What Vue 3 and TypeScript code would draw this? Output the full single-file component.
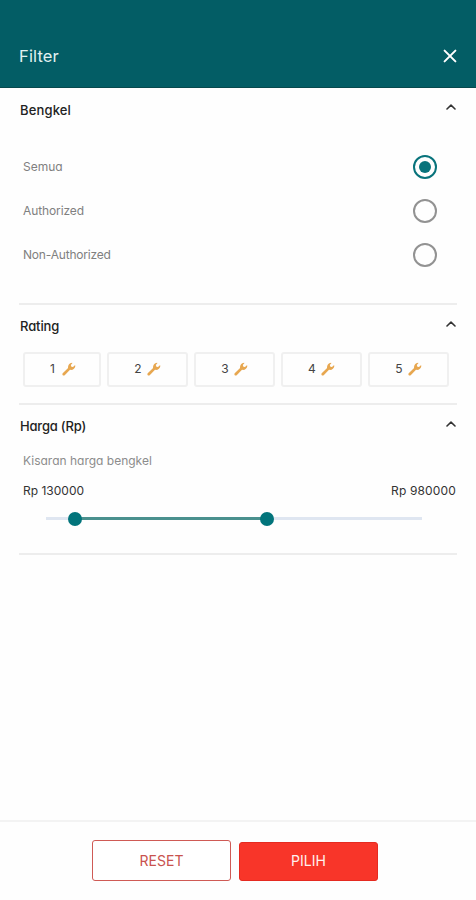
<script setup lang="ts">
import { computed, ref } from 'vue'

interface Workshop {
  id: string
  label: string
}

const workshops: Workshop[] = [
  { id: 'all', label: 'Semua' },
  { id: 'authorized', label: 'Authorized' },
  { id: 'non-authorized', label: 'Non-Authorized' },
]
const ratings: number[] = [1, 2, 3, 4, 5]

const workshop = ref<string>('all')
const selectedRating = ref<number | null>(null)
const low = ref<number>(7.8)
const high = ref<number>(58.9)

const rangeStyle = computed(() => ({ left: `${low.value}%`, width: `${high.value - low.value}%` }))

function reset(): void {
  workshop.value = 'all'
  selectedRating.value = null
}
</script>

<template>
  <div class="screen">
    <header class="header">
      <h1 class="title">Filter</h1>
      <svg class="close" viewBox="0 0 14 14"><path d="M1.6 1.6 12.4 12.4M12.4 1.6 1.6 12.4" /></svg>
    </header>

    <main class="content">
      <section class="section workshop">
        <div class="heading">
          <h2 class="name bengkel">Bengkel</h2>
          <svg class="chevron" viewBox="0 0 10 6"><path d="M1 5 5 1.2 9 5" /></svg>
        </div>
        <div class="options">
          <div v-for="w in workshops" :key="w.id" class="option" @click="workshop = w.id">
            <span class="label" :class="w.id">{{ w.label }}</span>
            <span class="radio" :class="{ on: workshop === w.id }"></span>
          </div>
        </div>
      </section>

      <section class="section rating">
        <div class="heading">
          <h2 class="name">Rating</h2>
          <svg class="chevron" viewBox="0 0 10 6"><path d="M1 5 5 1.2 9 5" /></svg>
        </div>
        <div class="ratings">
          <button v-for="r in ratings" :key="r" class="rate" @click="selectedRating = r">
            <span class="digit">{{ r }}</span>
            <svg class="wrench" viewBox="0 0 14 14">
              <path d="M.7 11.3 6.1 6.1C5.6 3.6 7.1 1.1 10 .7L10.5 1.1 8.8 3 9.4 4.7 11 5 12.9 3.2 13.4 3.7C13.1 6.5 10.7 8.4 8 7.8L2.7 13.2C1.2 14-.3 12.7 .7 11.3Z" />
            </svg>
          </button>
        </div>
      </section>

      <section class="section price">
        <div class="heading">
          <h2 class="name harga">Harga (Rp)</h2>
          <svg class="chevron" viewBox="0 0 10 6"><path d="M1 5 5 1.2 9 5" /></svg>
        </div>
        <p class="hint">Kisaran harga bengkel</p>
        <div class="values"><span>Rp 130000</span><span class="max">Rp 980000</span></div>
        <div class="slider">
          <div class="range" :style="rangeStyle"></div>
          <div class="thumb" :style="{ left: `${low}%` }"></div>
          <div class="thumb" :style="{ left: `${high}%` }"></div>
        </div>
      </section>
    </main>

    <footer class="footer">
      <button class="action reset" @click="reset">RESET</button>
      <button class="action apply">PILIH</button>
    </footer>
  </div>
</template>

<style>
body {
  margin: 0;
  background: #fefefe;
}
</style>

<style scoped>
.screen {
  display: flex;
  flex-direction: column;
  height: 900px;
  box-sizing: border-box;
  background: #fefefe;
  font-family: Inter, "Liberation Sans", sans-serif;
  font-feature-settings: "cv11", "ss03";
  color: #333;
}
h1, h2, p { margin: 0; }
button { font: inherit; font-feature-settings: inherit; color: inherit; padding: 0; box-sizing: border-box; }
.header {
  display: flex;
  align-items: center;
  justify-content: space-between;
  box-sizing: border-box;
  height: 88px;
  padding: 24px 19px 0;
  background: #035d65;
  border-bottom: 1px solid #07494d;
}
.title {
  color: #e2f1f1;
  font-size: 16.5px;
  font-weight: 400;
  letter-spacing: 0.15px;
  line-height: 24px;
}
.close { width: 14px; height: 14px; }
.close path { fill: none; stroke: #fff; stroke-width: 2; stroke-linecap: round; }
.content { flex: 1; padding: 0 19px; }
.section { box-sizing: border-box; border-bottom: 2px solid #ededed; }
.workshop { height: 217px; }
.rating { height: 100px; }
.price { height: 150px; }
.heading {
  display: flex;
  justify-content: space-between;
  padding: 11px 1px 0;
  height: 22px;
}
.name {
  font-size: 13px;
  font-weight: 500;
  line-height: 22px;
  color: #222;
}
.rating .name, .price .name { line-height: 20px; }
.rating .name { letter-spacing: -0.1px; }
.bengkel { letter-spacing: 0.15px; }
.harga { letter-spacing: -0.2px; }
.chevron { width: 10px; height: 6px; margin-top: 5px; }
.chevron path { fill: none; stroke: #333; stroke-width: 1.6; stroke-linecap: round; stroke-linejoin: round; }
.options { padding: 24px 20px 0 4px; }
.option {
  display: flex;
  align-items: center;
  justify-content: space-between;
  height: 44px;
}
.label { font-size: 12px; color: #808080; line-height: 20px; }
.authorized { letter-spacing: -0.1px; }
.non-authorized { letter-spacing: -0.19px; }
.radio {
  display: flex;
  align-items: center;
  justify-content: center;
  box-sizing: border-box;
  width: 24px;
  height: 24px;
  border: 2px solid #929292;
  border-radius: 50%;
}
.radio.on { border-color: #08737b; }
.radio.on::after {
  content: "";
  width: 12px;
  height: 12px;
  border-radius: 50%;
  background: #08737b;
}
.ratings {
  display: grid;
  grid-template-columns: 78px repeat(4, 82px);
  column-gap: 5.2px;
  padding: 14px 0 0 4px;
}
.rate {
  display: flex;
  align-items: center;
  justify-content: center;
  gap: 5px;
  height: 35px;
  border: 2px solid #f0f0f0;
  border-radius: 3px;
  background: transparent;
  padding: 0 0 2px;
}
.ratings { grid-template-columns: 78px repeat(4, 81px); column-gap: 6px; }
.digit { width: 8px; font-size: 12px; line-height: 20px; text-align: center; color: #444; }
.wrench { width: 14px; height: 14px; }
.wrench path { fill: #e7a750; }
.hint { padding: 13px 0 0 4px; font-size: 12px; line-height: 20px; color: #8c8c8c; }
.values {
  display: flex;
  justify-content: space-between;
  padding: 11px 1px 0 4px;
  font-size: 12px;
  line-height: 18px;
}
.max { letter-spacing: 0.15px; }
.slider {
  position: relative;
  height: 3px;
  margin: 17px 35px 0 27px;
  background: #dfe6f1;
}
.range { position: absolute; top: 0; height: 3px; background: #4a908e; }
.thumb {
  position: absolute;
  top: -5.5px;
  width: 14px;
  height: 14px;
  margin-left: -7px;
  border-radius: 50%;
  background: #02747b;
}
.footer {
  display: flex;
  align-items: flex-end;
  justify-content: center;
  gap: 8px;
  box-sizing: border-box;
  height: 80px;
  border-top: 2px solid #f3f3f3;
  padding: 0 6px 19px 0;
}
.action { width: 139px; border-radius: 3px; font-size: 14px; line-height: 20px; }
.reset { height: 41px; border: 1.5px solid #cf5a55; background: #fff; color: #c9534e; }
.apply { height: 39px; padding-bottom: 2px; border: 1px solid #e52a20; background: #f83529; color: #fff0ee; }
</style>
